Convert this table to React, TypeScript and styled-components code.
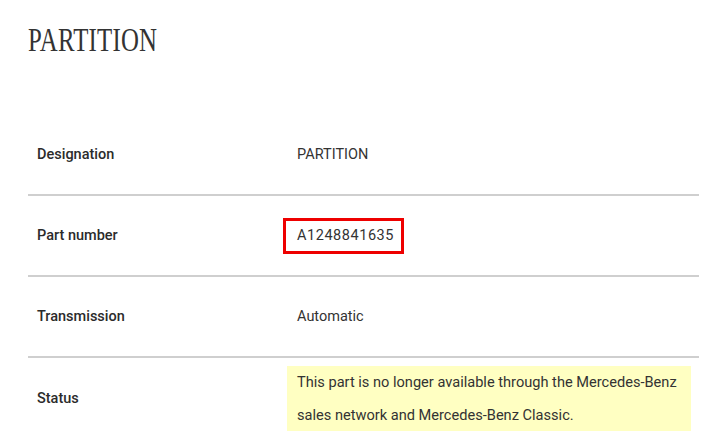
import React from "react";
import styled, { createGlobalStyle } from "styled-components";

const Global = createGlobalStyle`
  html, body { margin: 0; padding: 0; background: #fff; }
  body { font-family: Roboto, "Noto Sans", "Liberation Sans", sans-serif; color: #333; }
`;

const Page = styled.div`
  padding: 0 11px 0 28px;
`;

const Title = styled.h1`
  margin: 0;
  padding-top: 20px;
  height: 94px;
  box-sizing: border-box;
  font-family: "Liberation Serif", "Times New Roman", serif;
  font-weight: 400;
  font-size: 34px;
  line-height: 40px;
  color: #333;
  letter-spacing: 0.3px;
  transform: scaleX(0.73);
  transform-origin: left top;
  white-space: nowrap;
`;

const Table = styled.div`
  display: flex;
  flex-direction: column;
  margin-top: 21px;
`;

const Row = styled.div<{ $last?: boolean }>`
  display: grid;
  grid-template-columns: 255px 1fr;
  align-items: center;
  height: 81px;
  border-bottom: ${(p) => (p.$last ? "none" : "2px solid #cfcfcf")};
  box-sizing: border-box;
`;

const Label = styled.div`
  padding-left: 9px;
  font-size: 14.5px;
  font-weight: 500;
  color: #2b2b2b;
`;

const Value = styled.div<{ $flush?: boolean }>`
  padding-left: ${(p) => (p.$flush ? "0" : "14px")};
  font-size: 14.5px;
  font-weight: 400;
  color: #333;
`;

const PartNumber = styled.span`
  display: inline-block;
  margin-left: -14px;
  border: 3px solid #ee0000;
  padding: 6px 7px 6px 11px;
  letter-spacing: 0.55px;
  line-height: 18px;
  font-size: 14.5px;
`;

const Notice = styled.div`
  margin: 0 8px 0 4px;
  background: #ffffc2;
  padding: 0 10px;
  font-size: 14.6px;
  line-height: 33px;
  color: #333;
  height: 65px;
  box-sizing: border-box;
`;

const StatusRow = styled(Row)`
  height: auto;
  align-items: center;
  padding: 8px 0 12px;
`;

export default function App() {
  return (
    <>
      <Global />
      <Page>
        <Title>PARTITION</Title>
        <Table>
          <Row>
            <Label>Designation</Label>
            <Value>PARTITION</Value>
          </Row>
          <Row>
            <Label>Part number</Label>
            <Value>
              <PartNumber>A1248841635</PartNumber>
            </Value>
          </Row>
          <Row>
            <Label>Transmission</Label>
            <Value>Automatic</Value>
          </Row>
          <StatusRow $last>
            <Label>Status</Label>
            <Value $flush>
              <Notice>
                This part is no longer available through the Mercedes-Benz
                <br />
                sales network and Mercedes-Benz Classic.
              </Notice>
            </Value>
          </StatusRow>
        </Table>
      </Page>
    </>
  );
}
